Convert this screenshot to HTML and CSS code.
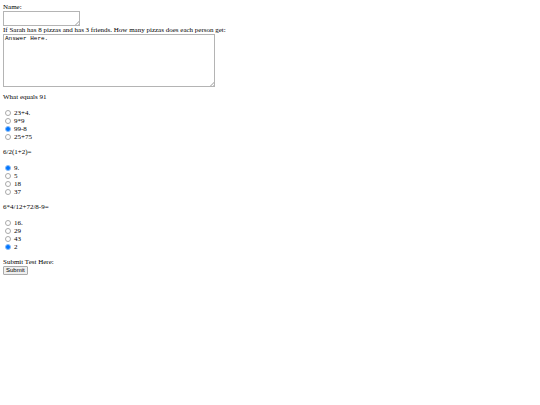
FILE: index.html
```
<!DOCTYPE html>
<html lang="en">
<head>
    <meta charset="UTF-8">
    <meta name="viewport" content="width=device-width, initial-scale=1.0">
    <title>Math Test</title>
    <link rel="stylesheet" href="styles.css">
</head>
<body>
    <form class="test">
        <label class="line" for="name">Name:</label>
        <textarea class="box name-box" id="name" name="name"></textarea>
        <label class="line" for="pizzas">If Sarah has 8 pizzas and has 3 friends. How many pizzas does each person get:</label>
        <textarea class="box answer-box" id="pizzas" name="pizzas">Answer Here.</textarea>

        <p class="question" id="q1">What equals 91</p>
        <div class="options" role="radiogroup" aria-labelledby="q1">
            <label class="option"><input type="radio" name="q1" value="a">23+4.</label>
            <label class="option"><input type="radio" name="q1" value="b">9*9</label>
            <label class="option"><input type="radio" name="q1" value="c" checked>99-8</label>
            <label class="option"><input type="radio" name="q1" value="d">25+75</label>
        </div>

        <p class="question" id="q2">6/2(1+2)=</p>
        <div class="options" role="radiogroup" aria-labelledby="q2">
            <label class="option"><input type="radio" name="q2" value="a" checked>9.</label>
            <label class="option"><input type="radio" name="q2" value="b">5</label>
            <label class="option"><input type="radio" name="q2" value="c">18</label>
            <label class="option"><input type="radio" name="q2" value="d">37</label>
        </div>

        <p class="question" id="q3">6*4/12+72/8-9=</p>
        <div class="options" role="radiogroup" aria-labelledby="q3">
            <label class="option"><input type="radio" name="q3" value="a">16.</label>
            <label class="option"><input type="radio" name="q3" value="b">29</label>
            <label class="option"><input type="radio" name="q3" value="c">43</label>
            <label class="option"><input type="radio" name="q3" value="d" checked>2</label>
        </div>

        <label class="line" for="submit">Submit Test Here:</label>
        <button class="submit-btn" id="submit" type="submit">Submit</button>
    </form>
</body>
</html>
```
FILE: styles.css
```
body {
    margin: 3px;
    background-color: #fff;
    color: #000;
    font-family: "Liberation Serif", "Times New Roman", serif;
    font-size: 7px;
    line-height: 8px;
}
.test {
    display: flex;
    flex-direction: column;
    align-items: flex-start;
}
.box {
    box-sizing: border-box;
    max-width: 100%;
    margin: 0;
    padding: 0 1px;
    border: 1px solid #b4b4b4;
    border-radius: 0;
    resize: none;
    overflow: auto;
    font-family: "Liberation Mono", monospace;
    font-size: 6px;
    line-height: 7px;
    /* small grip in the corner */
    background: linear-gradient(135deg, transparent 50%, #ccc 50%, #ccc 65%, transparent 65%, transparent 80%, #ccc 80%) no-repeat right bottom / 4px 4px #fff;
}
.name-box {
    width: 77px;
    height: 15px;
}
.answer-box {
    width: 212px;
    height: 53px;
    margin-bottom: 6px;
}
.question {
    margin: 0 0 8px;
}
.options {
    margin-bottom: 7px;
}
.option {
    display: flex;
    align-items: center;
    gap: 3px;
}
.option input {
    appearance: none;
    box-sizing: border-box;
    width: 6px;
    height: 6px;
    margin: 0 0 0 2px;
    border: 1px solid #aaa;
    border-radius: 50%;
    background-color: #fff;
}
.option input:checked {
    border-color: #8abdf8;
    background-color: #0075ff;
}
.submit-btn {
    padding: 0 2px;
    border: 1px solid #aaa;
    border-radius: 1px;
    background-color: #efefef;
    color: #000;
    font-family: "Liberation Sans", Arial, sans-serif;
    font-size: 6px;
    line-height: 7px;
}
```
